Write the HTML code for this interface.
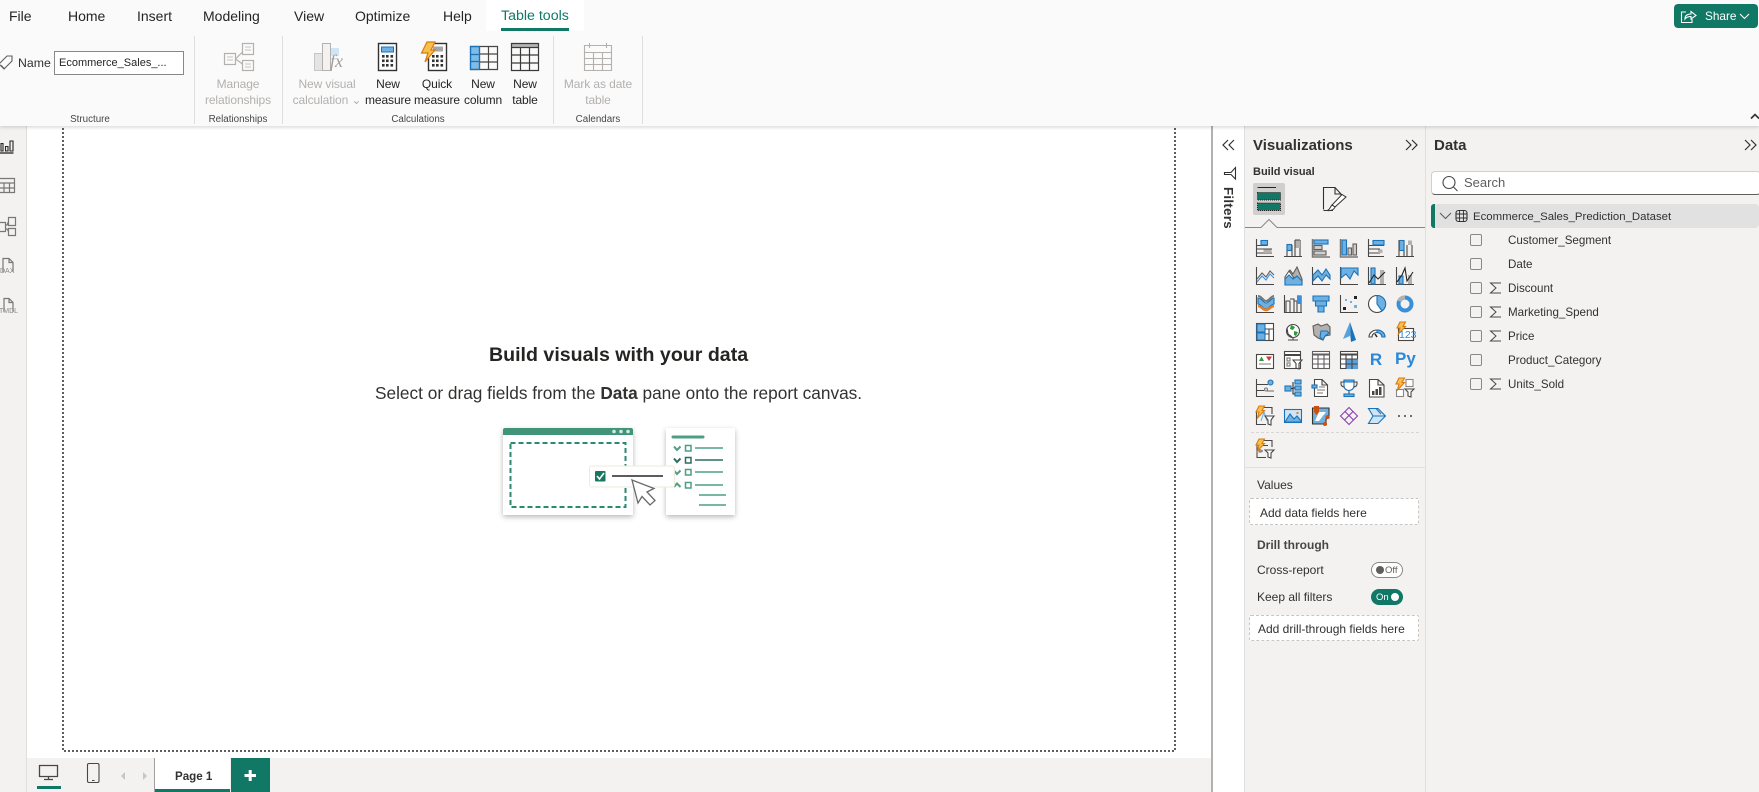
<!DOCTYPE html>
<html><head><meta charset="utf-8">
<style>
html,body{margin:0;padding:0;width:1759px;height:792px;overflow:hidden;background:#fff;font-family:"Liberation Sans",sans-serif;color:#252423}
.a{position:absolute}
.t{position:absolute;white-space:nowrap;line-height:16px;height:16px}
.c{transform:translateX(-50%);text-align:center}
.tab{font-size:14px;top:8px;line-height:16px;color:#252423}
.rb{font-size:12px;color:#252423;letter-spacing:-.1px}
.dis{color:#b3b0ad}
.grp{font-size:9.8px;color:#484644;top:112px}
.sep{position:absolute;top:36px;height:88px;width:1px;background:#e1dfdd}
.f{font-size:11.6px;color:#323130;left:1508px}
.cb{position:absolute;left:1470px;width:10px;height:10px;border:1px solid #8a8886;border-radius:2px;background:#f3f2f1}
svg{position:absolute;overflow:visible}
</style></head><body>

<!-- panes -->
<div class="a" style="left:0;top:0;width:27px;height:792px;background:#f3f2f1;border-right:1px solid #e1dfdd;box-sizing:border-box"></div>
<div class="a" style="left:27px;top:758px;width:1184px;height:34px;background:#f3f2f1"></div>
<div class="a" style="left:1211px;top:126px;width:1.5px;height:666px;background:#b3b0ad"></div>
<div class="a" style="left:1244px;top:126px;width:1px;height:666px;background:#e1dfdd"></div>
<div class="a" style="left:1245px;top:126px;width:180px;height:666px;background:#f3f2f1"></div>
<div class="a" style="left:1425px;top:126px;width:1px;height:666px;background:#e1dfdd"></div>
<div class="a" style="left:1426px;top:126px;width:333px;height:666px;background:#f3f2f1"></div>

<!-- canvas dotted frame -->
<svg style="left:0;top:0" width="1759" height="792">
<path d="M63 120V751H1175V120" fill="none" stroke="#605e5c" stroke-width="2" stroke-dasharray="2 2"/>
</svg>

<!-- ribbon -->
<div class="a" style="left:0;top:0;width:1759px;height:126px;background:#fafafa;box-shadow:0 1px 4px rgba(0,0,0,.18)"></div>
<div class="a" style="left:486px;top:0;width:98px;height:31px;background:#fff"></div>
<div class="a" style="left:501px;top:28px;width:68px;height:3px;background:#117865"></div>
<span class="t tab" style="left:9px">File</span>
<span class="t tab" style="left:68px">Home</span>
<span class="t tab" style="left:137px">Insert</span>
<span class="t tab" style="left:203px">Modeling</span>
<span class="t tab" style="left:294px">View</span>
<span class="t tab" style="left:355px">Optimize</span>
<span class="t tab" style="left:443px">Help</span>
<span class="t tab" style="left:501px;color:#117865;font-size:14.2px">Table tools</span>

<div class="sep" style="left:194px"></div><div class="sep" style="left:282px"></div><div class="sep" style="left:553px"></div><div class="sep" style="left:642px"></div>

<!-- ribbon name -->
<svg style="left:0;top:54px" width="14" height="18" fill="none" stroke="#605e5c" stroke-width="1.1"><path d="M-1 10L7 2H12V7L4 15ZM9.5 4.5h.1"/><path d="M1 11l4 4" stroke-width=".6"/></svg>
<span class="t" style="left:18px;top:55px;font-size:12.3px;color:#323130">Name</span>
<div class="a" style="left:54px;top:51px;width:130px;height:24px;background:#fff;border:1px solid #8a8886;box-sizing:border-box"></div>
<span class="t" style="left:59px;top:55px;font-size:11px;color:#252423">Ecommerce_Sales_...</span>

<!-- ribbon icons -->
<svg style="left:0;top:0" width="700" height="126" fill="none">
<g stroke="#b3b0ad" stroke-width="1.2">
<rect x="224.500" y="53.500" width="11" height="11"/><rect x="242.500" y="43.500" width="11" height="11"/><rect x="242.500" y="60.500" width="11" height="10"/>
<path d="M235.500 59L242.500 52M235.500 59L242.500 64"/><path d="M227 57h6M227 60h6M245 47h6M245 50h6M245 64h6M245 67h6" stroke-width=".8"/>
</g>
<rect x="314.500" y="53.500" width="8" height="17" fill="#e4e4e4" stroke="#c8c6c4"/>
<rect x="322.500" y="43.500" width="8" height="27" fill="#f3f2f1" stroke="#b3b0ad"/>
<rect x="331" y="48" width="8" height="8" fill="#cfe4f6"/>
<rect x="378.500" y="43.500" width="18" height="27" fill="#fff" stroke="#323130" stroke-width="1.4"/>
<rect x="381.500" y="47" width="12" height="5" fill="#6fb1e6" stroke="#1a73b8"/>
<g fill="#323130"><rect x="382" y="55" width="2.600" height="2.600"/><rect x="386" y="55" width="2.600" height="2.600"/><rect x="390.500" y="55" width="2.600" height="2.600"/><rect x="382" y="59.500" width="2.600" height="2.600"/><rect x="386" y="59.500" width="2.600" height="2.600"/><rect x="390.500" y="59.500" width="2.600" height="2.600"/><rect x="382" y="64" width="2.600" height="2.600"/><rect x="386" y="64" width="2.600" height="2.600"/><rect x="390.500" y="64" width="2.600" height="2.600"/></g>
<rect x="428.500" y="43.500" width="18" height="27" fill="#fff" stroke="#323130" stroke-width="1.4"/>
<rect x="433" y="46.500" width="10" height="5" fill="#a8a6a4"/>
<g fill="#323130"><rect x="432" y="55" width="2.600" height="2.600"/><rect x="436" y="55" width="2.600" height="2.600"/><rect x="440.500" y="55" width="2.600" height="2.600"/><rect x="432" y="59.500" width="2.600" height="2.600"/><rect x="436" y="59.500" width="2.600" height="2.600"/><rect x="440.500" y="59.500" width="2.600" height="2.600"/><rect x="432" y="64" width="2.600" height="2.600"/><rect x="436" y="64" width="2.600" height="2.600"/><rect x="440.500" y="64" width="2.600" height="2.600"/></g>
<path d="M427 42H435L431 50H435L425 62L428 53H421.500Z" fill="#f7c04a" stroke="#d97a12" stroke-width="1.2"/>
<rect x="470.500" y="46.500" width="9" height="23" fill="#7fbbe9"/>
<path d="M470.500 46.500H497.500V69.500H470.500ZM479.500 46.500V69.500M488.500 46.500V69.500M479.500 54H497.500M479.500 62H497.500" stroke="#484644" stroke-width="1.200"/>
<path d="M470.500 46.500V69.500H479.500V46.500ZM470.500 54.500H479.500M470.500 61.500H479.500" stroke="#1a73b8" stroke-width="1.200"/>
<rect x="511.500" y="43.500" width="27" height="4" fill="#b8b6b4"/>
<path d="M511.500 43.500H538.500V70.500H511.500ZM520.500 47.500V70.500M529.500 47.500V70.500M511.500 47.500H538.500M511.500 55H538.500M511.500 63H538.500" stroke="#3b3a39" stroke-width="1.200"/>
<path d="M584.500 45.500H611.500V70.500H584.500ZM584.500 52.500H611.500M584.500 58.500H611.500M584.500 64.500H611.500M593.500 52.500V70.500M602.500 52.500V70.500M589.500 43V48M606.500 43V48" stroke="#b3b0ad" stroke-width="1.100"/>
</svg>
<svg style="left:1730px;top:110px" width="29" height="16" fill="none"><path d="M21 8.500L25 4.500L29 8.500" stroke="#323130" stroke-width="1.600"/></svg>
<span class="t dis" style="left:330px;top:52px;font:italic 18px/18px 'Liberation Serif',serif;color:#a19f9d">fx</span>

<span class="t rb c dis" style="left:238px;top:76px">Manage</span>
<span class="t rb c dis" style="left:238px;top:92px">relationships</span>
<span class="t rb c dis" style="left:327px;top:76px">New visual</span>
<span class="t rb c dis" style="left:327px;top:92px">calculation ⌄</span>
<span class="t rb c" style="left:388px;top:76px">New</span>
<span class="t rb c" style="left:388px;top:92px">measure</span>
<span class="t rb c" style="left:437px;top:76px">Quick</span>
<span class="t rb c" style="left:437px;top:92px">measure</span>
<span class="t rb c" style="left:483px;top:76px">New</span>
<span class="t rb c" style="left:483px;top:92px">column</span>
<span class="t rb c" style="left:525px;top:76px">New</span>
<span class="t rb c" style="left:525px;top:92px">table</span>
<span class="t rb c dis" style="left:598px;top:76px">Mark as date</span>
<span class="t rb c dis" style="left:598px;top:92px">table</span>
<span class="t grp c" style="left:90px">Structure</span>
<span class="t grp c" style="left:238px">Relationships</span>
<span class="t grp c" style="left:418px">Calculations</span>
<span class="t grp c" style="left:598px">Calendars</span>

<!-- share -->
<div class="a" style="left:1674px;top:4px;width:84px;height:24px;background:#117865;border-radius:4px"></div>
<svg style="left:1680px;top:10px" width="18" height="14" fill="none" stroke="#fff" stroke-width="1.100"><path d="M6 2H1.500V12.500H12V9"/><path d="M5 9C5 5 8 4 11 4V1.500L16 5.500L11 9V6.500C8.500 6.500 6.500 7 5 9Z"/></svg>
<span class="t" style="left:1705px;top:8px;font-size:11.8px;color:#fff">Share</span>
<svg style="left:1739px;top:13px" width="12" height="8" fill="none" stroke="#fff" stroke-width="1.100"><path d="M1 1L5.500 5.500L10 1"/></svg>

<!-- left rail icons -->
<svg style="left:0;top:0" width="27" height="330" fill="none" stroke="#3b3a39" stroke-width="1.100">
<path d="M0 153H13.500" stroke="#252423" stroke-width="1.300"/>
<path d="M1 143.500H3V151H1ZM5.500 146.500H8V151H5.500ZM10 141H13V151H10Z" stroke="#252423" stroke-width="1.100"/>
<g stroke="#797775" stroke-width="1.200">
<path d="M-1 178.500H14.500V192.500H-1ZM-1 183H14.500M-1 188H14.500M4 183V192.500M9.500 183V192.500"/>
<path d="M-1 222.500H5.500V231.500H-1M8.500 217.500H15.500V225.500H8.500ZM8.500 228.500H15.500V235.500H8.500ZM5.500 225H7L8.500 221.500M5.500 229H7L8.500 231.500"/>
<path d="M3 272V258.500H9L13 262.500V272M9 258.500V262.500H13"/>
<path d="M4 312V298.500H9L13 302.500V312M9 298.500V302.500H13"/>
</g></svg>
<span class="t" style="left:0;top:264px;font-size:7px;color:#8a8886">DAX</span>
<span class="t" style="left:-1px;top:304px;font-size:7px;color:#8a8886">TMDL</span>

<!-- center -->
<span class="t" style="left:489px;top:344px;line-height:22px;height:22px;font-size:19.6px;font-weight:bold;color:#252423">Build visuals with your data</span>
<span class="t" style="left:375px;top:384px;line-height:18px;height:18px;font-size:17.25px;color:#323130">Select or drag fields from the <b>Data</b> pane onto the report canvas.</span>

<!-- illustration -->
<div class="a" style="left:503px;top:428px;width:130px;height:87px;background:#fff;box-shadow:0 2px 5px rgba(0,0,0,.28)"></div>
<div class="a" style="left:666px;top:428px;width:69px;height:87px;background:#fff;box-shadow:0 2px 5px rgba(0,0,0,.28)"></div>
<svg style="left:0;top:0" width="800" height="530" fill="none">
<path d="M503 435V430Q503 428 505 428H631Q633 428 633 430V435Z" fill="#3f9479"/>
<circle cx="614" cy="431.500" r="1.800" fill="#d6e6e0"/><circle cx="621" cy="431.500" r="1.800" fill="#d6e6e0"/><circle cx="628" cy="431.500" r="1.800" fill="#d6e6e0"/>
<rect x="510.500" y="443" width="115" height="64" stroke="#2c8a70" stroke-width="2" stroke-dasharray="5 3"/>
<path d="M673 437H703" stroke="#4d9e85" stroke-width="3" stroke-linecap="round"/>
<g stroke="#4d9e85" stroke-width="1.500">
<path d="M695 448H723M695 472H723M695 485H723M699 495H726M699 505H726"/>
<path d="M674 446.500L677 450L680.500 446.500M674 470.500L677 474L680.500 470.500M674 487L677 483.500L680.500 487" stroke-width="2"/>
<rect x="685.500" y="445.500" width="5.500" height="5.500"/><rect x="685.500" y="469.500" width="5.500" height="5.500"/><rect x="685.500" y="482.500" width="5.500" height="5.500"/>
</g>
<g stroke="#2f6d5e" stroke-width="1.500"><path d="M695 460H723"/><path d="M674 458.500L677 462L680.500 458.500" stroke-width="2"/><rect x="685.500" y="457.500" width="5.500" height="5.500"/></g>
<rect x="589.500" y="466" width="85" height="21" rx="2" fill="#fff" stroke="#efe9dc"/>
<rect x="595" y="471" width="10.500" height="10.500" rx="1" fill="#17785f"/>
<path d="M597 476L599.500 479L604 473" stroke="#fff" stroke-width="1.600"/>
<path d="M612 476H663" stroke="#444" stroke-width="1.800"/>
<path d="M632 480L654 488.500L647 492L655 500.500L650 505L642 496.500L638 503Z" fill="#fff" stroke="#6a6a6a" stroke-width="1.300"/>
</svg>

<!-- bottom bar -->
<svg style="left:0;top:758px" width="280" height="34" fill="none">
<path d="M39.500 7.500H57.500V18.500H39.500ZM48.500 18.500V21M44 21.500H53" stroke="#484644" stroke-width="1.300"/>
<rect x="37" y="28" width="24" height="3" fill="#117865"/>
<rect x="87.500" y="5.500" width="11.500" height="19" rx="1.500" stroke="#484644" stroke-width="1.100"/><path d="M92 22.500H94.500" stroke="#484644"/>
<path d="M125 14V22L121 18Z" fill="#c8c6c4"/><path d="M143 14V22L147 18Z" fill="#c8c6c4"/>
<rect x="154" y="0" width="1" height="34" fill="#a19f9d"/>
<rect x="155" y="0" width="75" height="34" fill="#fff"/>
<rect x="155" y="31" width="75" height="3" fill="#117865"/>
<rect x="231" y="0" width="39" height="34" fill="#117865"/>
<path d="M244.500 17.500H256M250.200 12V23" stroke="#fff" stroke-width="3"/>
</svg>
<span class="t" style="left:175px;top:769px;font-size:11.6px;font-weight:bold;color:#323130">Page 1</span>

<!-- filters pane -->
<svg style="left:1222px;top:138px" width="16" height="44" fill="none" stroke="#323130" stroke-width="1.200">
<path d="M6 2L1 7L6 12M12 2L7 7L12 12"/>
<path d="M13.500 29.500V41L9 36.500H2.500V34.500H9Z" stroke-width="1.100"/>
</svg>
<span class="t" style="left:1228px;top:208px;font-size:13.3px;font-weight:bold;color:#323130;transform:translate(-50%,-50%) rotate(90deg);transform-origin:center;letter-spacing:.3px">Filters</span>

<!-- viz pane -->
<span class="t" style="left:1253px;top:137.500px;font-size:15px;font-weight:bold;color:#323130">Visualizations</span>
<svg style="left:1405px;top:138px" width="14" height="14" fill="none" stroke="#323130" stroke-width="1.200"><path d="M1 2L6 7L1 12M7 2L12 7L7 12"/></svg>
<span class="t" style="left:1253px;top:164px;font-size:11px;font-weight:bold;color:#323130">Build visual</span>
<div class="a" style="left:1253px;top:183px;width:32px;height:32px;background:#d0cfce;border-radius:2px"></div>
<svg style="left:1245px;top:180px" width="180" height="50" fill="none">
<path d="M12.500 7.500H31" stroke="#252423"/>
<rect x="12.500" y="12.500" width="23" height="7.500" fill="#117865" stroke="#252423" stroke-dasharray="1 1"/>
<rect x="12.500" y="23" width="23" height="7.500" fill="#117865" stroke="#252423" stroke-dasharray="1 1"/>
<path d="M78.500 29.500V7.500H90L96 14V18M90 7.500V14H96M78.500 30.500H88" stroke="#323130" stroke-width="1.100"/>
<path d="M101 17L90 27L87 25L97 14.500Z" fill="#fff" stroke="#323130"/><path d="M87 25L90 27C89 30 85 31 82.500 30.500C85 29.500 85 27 87 25Z" fill="#fff" stroke="#323130"/>
<path d="M0 47.500H16L24 39.500L32 47.500H180" stroke="#8a8886" fill="#f3f2f1"/>
</svg>

<svg style="left:0;top:0" width="1430" height="470" fill="none" stroke-width="1.100" stroke="#3b3a39">
<!-- row 1 -->
<g transform="translate(1256,239)"><path d="M.5 0V17.500H18M.5 6.500H11.500M.5 10H16M.5 14H16" stroke="#484644"/><rect x="5" y="1.500" width="6.500" height="4.500" fill="#70b0e0" stroke="#1a73b8"/><rect x="7.500" y="10.500" width="8" height="3.500" fill="#b3b0ad" stroke="none"/></g>
<g transform="translate(1284,239)"><path d="M0 17.500H18M3 6V18M8 6V18M11 1V18M16 1V18M11 1H16" stroke="#484644"/><rect x="3" y="5.500" width="4.500" height="6" fill="#70b0e0" stroke="#1a73b8"/><rect x="11.500" y="1.500" width="4.500" height="7.500" fill="#b3b0ad" stroke="none"/></g>
<g transform="translate(1312,239)"><path d="M.5 0V18H18" stroke="#797775" stroke-width="1.500"/><rect x="2" y="1" width="14" height="4" fill="#70b0e0" stroke="#1a73b8"/><rect x="2" y="6.500" width="8" height="4" fill="#d0cfce" stroke="#605e5c"/><rect x="2" y="12" width="12" height="4" fill="#d0cfce" stroke="#605e5c"/></g>
<g transform="translate(1340,239)"><path d="M.5 0V18H18" stroke="#797775" stroke-width="1.500"/><rect x="2" y="1" width="4.500" height="15" fill="#70b0e0" stroke="#1a73b8"/><rect x="8" y="9" width="3.500" height="7" fill="#d0cfce" stroke="#605e5c"/><rect x="13" y="5" width="3.500" height="11" fill="#d0cfce" stroke="#605e5c"/></g>
<g transform="translate(1368,239)"><path d="M.5 0V17.500H16M.5 6.500H16M.5 10H12M.5 14H12" stroke="#484644"/><rect x="5" y="1.500" width="11" height="4.500" fill="#70b0e0" stroke="#1a73b8"/><rect x="10" y="10.500" width="4.500" height="3.500" fill="#b3b0ad" stroke="none"/></g>
<g transform="translate(1396,239)"><path d="M0 17.500H18M3 1V18M8 1V18M11 6V18M16 6V18" stroke="#484644"/><rect x="3.500" y="1.500" width="4.500" height="10" fill="#70b0e0" stroke="#1a73b8"/><rect x="12" y="1.500" width="4" height="4.500" fill="#b3b0ad" stroke="none"/></g>
<!-- row 2 -->
<g transform="translate(1256,267)"><path d="M.5 0V17.500H18" stroke="#484644"/><path d="M1 12L6 6L10 10L14 4L18 8" stroke="#605e5c"/><path d="M1 15L6 9L10 13L14 7L18 11" stroke="#3a8fd8"/></g>
<g transform="translate(1284,267)"><path d="M1 10L6 3L9 7L13 0L18 12V18H1Z" fill="#b3b0ad" stroke="#605e5c"/><path d="M1 10L5 4L10 11L6 12L1 12Z" fill="#fff" stroke="#605e5c"/><path d="M1 12L5 8L9 12L13 9L18 14V18H1Z" fill="#70b0e0" stroke="#1a73b8"/></g>
<g transform="translate(1312,267)"><path d="M.5 0V17.500H18" stroke="#484644"/><path d="M1 8L6 3L10 8L14 2L18 8V12L14 8L10 14L6 9L1 14Z" fill="#70b0e0" stroke="#1a73b8"/></g>
<g transform="translate(1340,267)"><path d="M.5 0V17.500H18" stroke="#484644"/><path d="M1 1H18V8L14 4L10 12L6 7L1 11Z" fill="#70b0e0" stroke="#1a73b8"/></g>
<g transform="translate(1368,267)"><path d="M.5 0V17.500H18" stroke="#484644"/><rect x="3" y="1" width="4" height="16" fill="#70b0e0" stroke="#1a73b8"/><rect x="12" y="3" width="4" height="14" fill="#b3b0ad" stroke="none"/><path d="M1 16L6 8L10 12L17 5" stroke="#252423"/></g>
<g transform="translate(1396,267)"><path d="M.5 0V17.500H18" stroke="#484644"/><rect x="3" y="9" width="4" height="8" fill="#70b0e0" stroke="#1a73b8"/><rect x="12" y="8" width="4" height="9" fill="#b3b0ad" stroke="none"/><path d="M1 15L6 8L9 1L11 14L17 5" stroke="#252423"/></g>
<!-- row 3 -->
<g transform="translate(1256,295)"><path d="M.5 0V17.500H18" stroke="#484644"/><path d="M2 3C6 3 7 8 10 8C13 8 15 3 18 3V9C15 9 13 14 10 14C7 14 5 9 2 9Z" fill="#70b0e0" stroke="#1a73b8"/><path d="M2 1C6 1 7 6 10 6C13 6 15 1 18 1" stroke="#797775" stroke-width="2"/><path d="M2 11C5 11 7 15 10 15C13 15 15 11 18 11" stroke="#e67e22" stroke-width="2.500"/></g>
<g transform="translate(1284,295)"><path d="M.5 0V17.500H18" stroke="#484644"/><path d="M2 18V6H6V18M6 4H10V18M10 6H13V18M13 1H17V18" stroke="#484644"/><rect x="13" y="1" width="4" height="8" fill="#3a8fd8" stroke="none"/></g>
<g transform="translate(1312,295)"><path d="M1 1H17V6H1ZM3.500 6H14.500V11H3.500ZM6 11H12V17H6Z" fill="#70b0e0" stroke="#1a73b8"/></g>
<g transform="translate(1340,295)"><path d="M.5 0V17.500H18" stroke="#484644"/><g stroke="none"><rect x="3" y="12" width="3" height="3" fill="#252423"/><rect x="5" y="4" width="2" height="2" fill="#70b0e0"/><rect x="10" y="6" width="2" height="2" fill="#70b0e0"/><rect x="14" y="1" width="3" height="3" fill="#252423"/><rect x="14" y="10" width="3" height="3" fill="#70b0e0"/></g></g>
<g transform="translate(1368,295)"><circle cx="9" cy="9" r="8.500" fill="#fff" stroke="#484644"/><path d="M9 .5A8.500 8.500 0 0 1 14 16L9 9Z" fill="#70b0e0" stroke="#1a73b8"/></g>
<g transform="translate(1396,295)"><circle cx="9" cy="9" r="6.500" stroke="#3a8fd8" stroke-width="4"/><path d="M3 6A6.500 6.500 0 0 1 9 2.500" stroke="#b3b0ad" stroke-width="4"/></g>
<!-- row 4 -->
<g transform="translate(1256,323)"><rect x=".5" y=".5" width="17" height="17" fill="#fff" stroke="#484644"/><path d="M1 1H9V9H1ZM1 10H9V17H1Z" fill="#70b0e0" stroke="#1a73b8"/><path d="M9 6H17M13 6V17M9 11H13" stroke="#484644"/></g>
<g transform="translate(1284,323)"><circle cx="9" cy="8" r="6.500" fill="#fff" stroke="#484644"/><path d="M7 2L11 4L9 7L6 6ZM10 8L14 9L12 13L10 12Z" fill="#2f9a3b" stroke="none"/><path d="M3 5L4 11L8 14M4 17H14M9 15V17" stroke="#484644"/></g>
<g transform="translate(1312,323)"><path d="M1 3L6 1L9 3L15 1L18 4V12L13 13L11 17L6 15L2 12Z" fill="#b3b0ad" stroke="#605e5c"/><path d="M9 8H15L17 10L13 13L11 17L8 14Z" fill="#70b0e0" stroke="#1a73b8"/></g>
<g transform="translate(1340,323)"><path d="M10 -1L3 16L10 13L11 19Z" fill="#5aa0dc" stroke="none"/><path d="M10 -1L11 19L16 17Z" fill="#1a73b8" stroke="none"/></g>
<g transform="translate(1368,323)"><path d="M1 14A8 7 0 0 1 17 14H14A5 4.500 0 0 0 4 14Z" fill="#fff" stroke="#484644"/><path d="M9 7A8 7 0 0 1 17 14H14A5 4.500 0 0 0 9 9.500Z" fill="#70b0e0" stroke="#1a73b8"/><path d="M9 14L7 11" stroke="#252423" stroke-width="1.500"/></g>
<g transform="translate(1396,323)"><rect x="2.500" y="5.500" width="15" height="12" fill="#fff" stroke="#484644"/><path d="M4 -1H9.500L7 3.500H9.500L2.500 11L4 5H1Z" fill="#f7c04a" stroke="#d97a12"/></g>
<!-- row 5 -->
<g transform="translate(1256,351)"><rect x=".5" y="3.500" width="17" height="14" fill="#fff" stroke="#484644"/><path d="M3 10L5.500 5.500L8 10Z" fill="#2f9a3b" stroke="none"/><path d="M10 5.500H16L13 10Z" fill="#d13438" stroke="none"/><path d="M3 13H15" stroke="#8a8886"/></g>
<g transform="translate(1284,351)"><rect x=".5" y=".5" width="16" height="17" fill="#fff" stroke="#484644"/><path d="M.5 4H16.500" stroke="#484644" stroke-width="2"/><rect x="3" y="7" width="3" height="3" stroke="#797775"/><rect x="3" y="12" width="3" height="3" stroke="#797775"/><path d="M9 9H18L15 12.500V18L12 17V12.500Z" fill="#fff" stroke="#484644"/></g>
<g transform="translate(1312,351)" stroke="#605e5c"><rect x=".5" y=".5" width="17" height="17" fill="#fff"/><path d="M.5 3.500H17.500" stroke-width="2"/><path d="M.5 8H17.500M.5 13H17.500M6 4V18M12 4V18"/></g>
<g transform="translate(1340,351)" stroke="#484644"><rect x=".5" y=".5" width="17" height="17" fill="#fff"/><rect x="6" y="8" width="12" height="10" fill="#5aa0dc" stroke="none"/><path d="M.5 3.500H17.500" stroke-width="2"/><path d="M.5 8H17.500M.5 13H17.500M6 4V18M12 4V18"/></g>
<!-- row 6 -->
<g transform="translate(1256,379)" stroke="#484644"><path d="M.5 0V17.500H18M.5 5.500H12M.5 11.500H8"/><circle cx="14.500" cy="3.500" r="2.500" fill="#70b0e0" stroke="#1a73b8"/><circle cx="10" cy="10.500" r="1.500" stroke="#797775"/><path d="M11 12H18" stroke="#797775"/></g>
<g transform="translate(1284,379)" stroke="#1a73b8" fill="#70b0e0"><rect x="1" y="7" width="6" height="5"/><rect x="11" y="1" width="6" height="4"/><rect x="11" y="7" width="6" height="4"/><rect x="11" y="13" width="6" height="4"/><path d="M7 9.500H9M9 3V15H11M9 9H11" fill="none" stroke="#323130"/></g>
<g transform="translate(1312,379)"><path d="M2.500 17.500V.5H10L15.500 6V17.500ZM10 .5V6H15.500" fill="#fff" stroke="#484644"/><rect x="0" y="6" width="5" height="3" fill="#70b0e0" stroke="#1a73b8"/><path d="M7 8H13M5 11H13M5 14H11" stroke="#797775"/></g>
<g transform="translate(1340,379)" stroke="#1a73b8"><path d="M4 1H14V7C14 10 11 11.500 9 11.500C7 11.500 4 10 4 7Z" fill="#fff"/><path d="M4 1H14V3H4Z" fill="#70b0e0"/><path d="M4 3H1V5C1 7 3 8 4.500 8M14 3H17V5C17 7 15 8 13.500 8M9 11.500V15" stroke="#484644"/><rect x="4" y="15" width="10" height="2.500" fill="#70b0e0"/></g>
<g transform="translate(1368,379)"><path d="M1.500 18V.5H10L16 6V18ZM10 .5V6H16" fill="#fff" stroke="#484644"/><path d="M4 16V12H6.500V16ZM7.500 16V10H10V16ZM11 16V8H13.500V16Z" fill="#484644" stroke="none"/></g>
<g transform="translate(1396,379)"><rect x="10" y=".5" width="7" height="7" stroke="#8a8886" fill="#fff"/><rect x=".5" y="10.500" width="7" height="7" stroke="#8a8886" fill="#fff"/><path d="M9 10H18L15 13V18L12 17V13Z" fill="#fff" stroke="#484644"/><path d="M3 -1H8.500L6 3.500H8.500L1.500 11L3 5H0Z" fill="#f7c04a" stroke="#d97a12"/></g>
<!-- row 7 -->
<g transform="translate(1256,407)"><path d="M.5 4V17.500H10M7 .5H16V7" stroke="#484644"/><path d="M5 14L8 5L11 14" stroke="#70b0e0"/><path d="M9 9H18L15 13V18L12 17V13Z" fill="#fff" stroke="#484644"/><path d="M3 -1H8.500L6 3.500H8.500L1.500 11L3 5H0Z" fill="#f7c04a" stroke="#d97a12"/></g>
<g transform="translate(1284,407)"><rect x=".5" y="2.500" width="17" height="13" fill="#cfe4f6" stroke="#1a73b8"/><path d="M1 15L6 7L10 12L13 9L17 14V15Z" fill="#70b0e0" stroke="#1a73b8"/><rect x="12.500" y="5" width="2" height="2" fill="#e67e22" stroke="none"/></g>
<g transform="translate(1312,407)"><path d="M.5 1H17V11L14 12V17H.5Z" fill="#70b0e0" stroke="#323130"/><path d="M7 5H14L10 10L7 14H3Z" fill="#fff" stroke="none"/><path d="M2 -1H7V5L4.500 8L2 5Z" fill="#ca5010" stroke="none"/><circle cx="15.500" cy="10" r="2" fill="#ca5010" stroke="none"/><circle cx="13" cy="17" r="2" fill="#ca5010" stroke="none"/></g>
<g transform="translate(1340,407)" stroke="#8a3fb0"><path d="M9 .5L17.500 9L9 17.500L.5 9Z"/><path d="M5 4.500L13.500 13M13 4.500L4.500 13"/></g>
<g transform="translate(1368,407)" stroke="#1a73b8"><path d="M.5 1.500H10L17.500 9L10 16.500H.5L5 9Z" fill="#cfe4f6"/><path d="M5 9H17M8 1.500L13 7"/></g>
<g transform="translate(1396,407)" fill="#484644" stroke="none"><circle cx="3" cy="9" r="1"/><circle cx="9" cy="9" r="1"/><circle cx="15" cy="9" r="1"/></g>
<!-- divider -->
<path d="M1251 432.500H1419" stroke="#d8d6d4" stroke-dasharray="3 2"/>
<g transform="translate(1256,440)"><path d="M7 .5H16V7M1 5V17.500H10M5 5.500H12M5 11H7" stroke="#484644"/><rect x="3" y="10" width="2" height="2" stroke="#797775"/><path d="M9 10H18L15 13V18L12 17V13Z" fill="#fff" stroke="#484644"/><path d="M3 -1H8.500L6 3.500H8.500L1.500 11L3 5H0Z" fill="#f7c04a" stroke="#d97a12"/></g>
<path d="M1245 467.500H1425" stroke="#e1dfdd"/>
</svg>
<span class="t" style="left:1399px;top:327px;font-size:10.5px;color:#2b88d8">123</span>
<span class="t" style="left:1368px;top:351px;font-size:17px;line-height:18px;height:18px;font-weight:bold;color:#2b88d8;width:16px;text-align:center">R</span>
<span class="t" style="left:1395px;top:350px;font-size:17px;line-height:18px;height:18px;font-weight:bold;color:#2b88d8">Py</span>

<span class="t" style="left:1257px;top:477px;font-size:12px;color:#323130">Values</span>
<div class="a" style="left:1249px;top:498px;width:170px;height:27px;background:#fff;border:1px dashed #c8c6c4;box-sizing:border-box;border-radius:2px"></div>
<span class="t" style="left:1260px;top:505px;font-size:12px;color:#323130">Add data fields here</span>
<span class="t" style="left:1257px;top:537px;font-size:12px;font-weight:bold;color:#484644">Drill through</span>
<span class="t" style="left:1257px;top:562px;font-size:12px;color:#323130">Cross-report</span>
<div class="a" style="left:1371px;top:562px;width:32px;height:16px;background:#fff;border:1px solid #8a8886;box-sizing:border-box;border-radius:8px"></div>
<div class="a" style="left:1376px;top:566px;width:8px;height:8px;background:#605e5c;border-radius:50%"></div>
<span class="t" style="left:1385px;top:563px;font-size:9.500px;color:#605e5c">Off</span>
<span class="t" style="left:1257px;top:589px;font-size:12px;color:#323130">Keep all filters</span>
<div class="a" style="left:1371px;top:589px;width:32px;height:16px;background:#117865;border-radius:8px"></div>
<div class="a" style="left:1391px;top:593px;width:8px;height:8px;background:#fff;border-radius:50%"></div>
<span class="t" style="left:1376px;top:590px;font-size:9.500px;color:#fff">On</span>
<div class="a" style="left:1249px;top:615px;width:170px;height:26px;background:#fff;border:1px dashed #c8c6c4;box-sizing:border-box;border-radius:2px"></div>
<span class="t" style="left:1258px;top:621px;font-size:12px;color:#323130">Add drill-through fields here</span>

<!-- data pane -->
<span class="t" style="left:1434px;top:137.500px;font-size:15px;font-weight:bold;color:#323130">Data</span>
<svg style="left:1744px;top:138px" width="14" height="14" fill="none" stroke="#323130" stroke-width="1.200"><path d="M1 2L6 7L1 12M7 2L12 7L7 12"/></svg>
<div class="a" style="left:1431px;top:171px;width:330px;height:24px;background:#fff;border:1px solid #d2d0ce;border-bottom:1px solid #605e5c;box-sizing:border-box;border-radius:4px"></div>
<svg style="left:1441px;top:175px" width="18" height="18" fill="none" stroke="#484644" stroke-width="1.100"><circle cx="8" cy="7.500" r="6"/><path d="M12.500 12L16.500 16"/></svg>
<span class="t" style="left:1464px;top:175px;font-size:13px;color:#605e5c">Search</span>
<div class="a" style="left:1431px;top:204px;width:328px;height:24px;background:#e1e1e1;border-radius:4px"></div>
<div class="a" style="left:1431px;top:204px;width:4px;height:24px;background:#117865;border-radius:3px 0 0 3px"></div>
<svg style="left:1438px;top:208px" width="36" height="16" fill="none" stroke="#484644"><path d="M2 5L7.500 10.500L13 5" stroke="#605e5c" stroke-width="1.100"/><rect x="18" y="2.500" width="11" height="11" rx="2.500" stroke-width="1.100" stroke="#323130"/><path d="M18 6H29M18 10H29M21.500 2.500V13.500M25.500 2.500V13.500" stroke="#323130" stroke-width=".9"/></svg>
<span class="t" style="left:1473px;top:208.500px;font-size:11.400px;color:#323130">Ecommerce_Sales_Prediction_Dataset</span>

<div class="cb" style="top:234px"></div><div class="cb" style="top:258px"></div><div class="cb" style="top:282px"></div><div class="cb" style="top:306px"></div><div class="cb" style="top:330px"></div><div class="cb" style="top:354px"></div><div class="cb" style="top:378px"></div>
<svg style="left:1490px;top:0" width="14" height="400" fill="none" stroke="#484644" stroke-width="1">
<path d="M11 283H.5L6 288L.5 293H11"/><path d="M11 307H.5L6 312L.5 317H11"/><path d="M11 331H.5L6 336L.5 341H11"/><path d="M11 379H.5L6 384L.5 389H11"/>
</svg>
<span class="t f" style="top:233px">Customer_Segment</span>
<span class="t f" style="top:257px">Date</span>
<span class="t f" style="top:281px">Discount</span>
<span class="t f" style="top:305px">Marketing_Spend</span>
<span class="t f" style="top:329px">Price</span>
<span class="t f" style="top:353px">Product_Category</span>
<span class="t f" style="top:377px">Units_Sold</span>

</body></html>
